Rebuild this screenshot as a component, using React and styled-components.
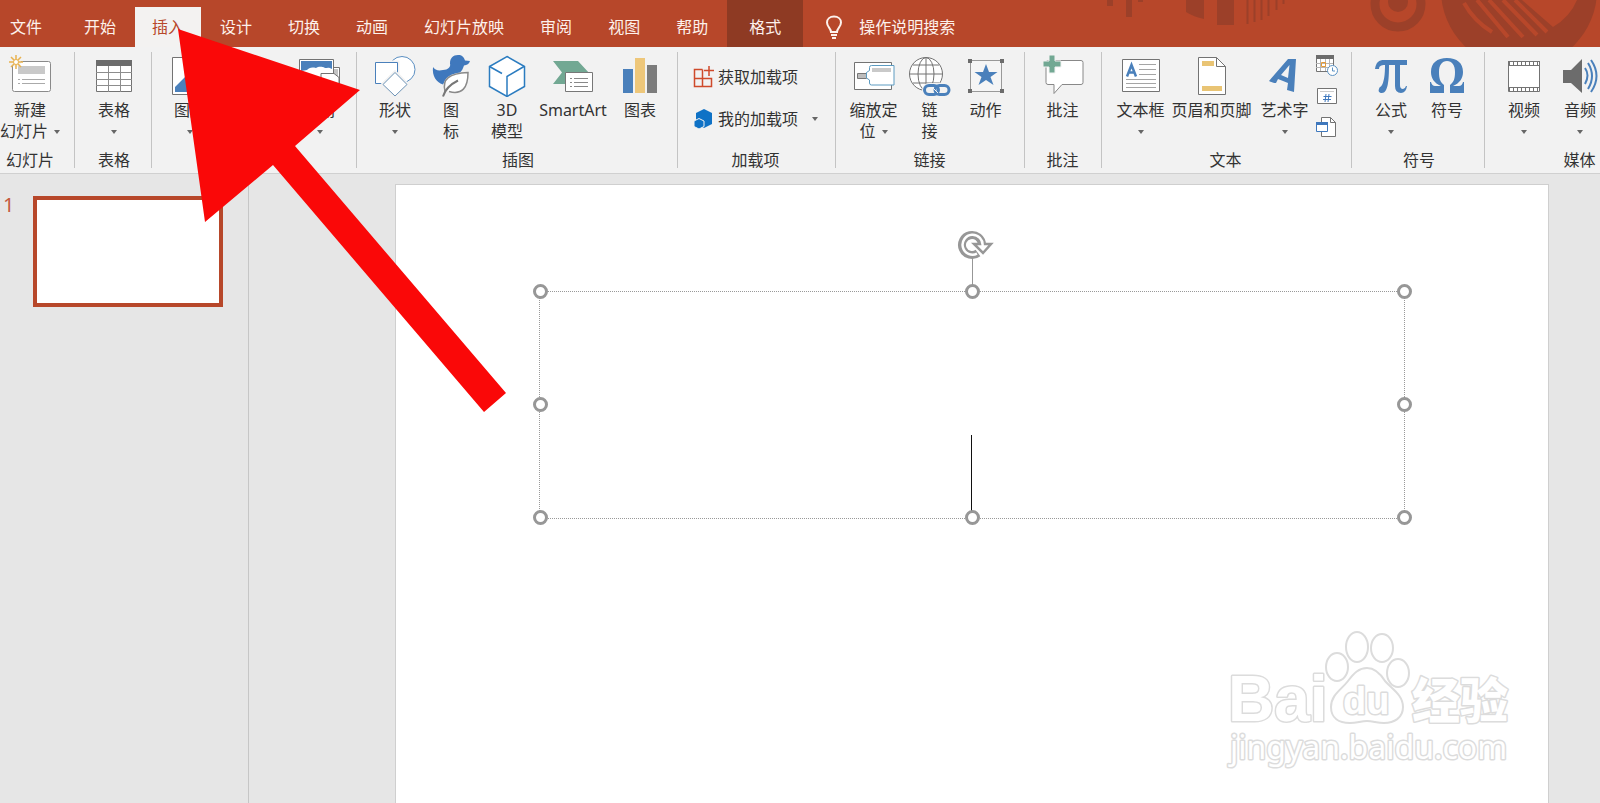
import React from 'react';
import styled, { createGlobalStyle, css } from 'styled-components';

const Global = createGlobalStyle`
  * { box-sizing: border-box; }
  body {
    margin: 0;
    background: #e6e6e6;
    font-family: "Noto Sans", "Noto Sans CJK SC", sans-serif;
    font-size: 16px;
    color: #333;
  }
  button, input {
    font: inherit;
    color: inherit;
    border: 0;
    padding: 0;
    background: none;
  }
`;

const Page = styled.div`
  position: relative;
  display: flex;
  flex-direction: column;
  height: 100vh;
  overflow: hidden;
`;

const TitleBar = styled.header`
  position: relative;
  display: flex;
  align-items: flex-end;
  flex: none;
  height: 47px;
  background: #b7472a;
  color: #fdf1ec;
`;

const Tabs = styled.nav`
  display: flex;
  align-items: flex-end;
  gap: 2px;
`;

const Tab = styled.button`
  height: 40px;
  padding: 0 17px;
  line-height: 40px;
  white-space: nowrap;
  ${(p) => p.$first && css`padding: 0 17px 0 10px; margin-right: 6px;`}
  ${(p) => p.$active && css`background: #f3f2f1; color: #b7472a;`}
  ${(p) => p.$context && css`
    height: 47px;
    padding: 7px 22px 0;
    background: #8e3a23;
  `}
`;

const Search = styled.label`
  display: flex;
  align-items: center;
  gap: 16px;
  height: 40px;
  margin-left: 22px;
`;

const SearchInput = styled.input`
  width: 130px;
  outline: none;
  &::placeholder { color: #fdf1ec; opacity: 1; }
`;

const Ornament = styled.svg`
  position: absolute;
  right: 0;
  top: 0;
`;

const Ribbon = styled.section`
  display: flex;
  flex: none;
  height: 127px;
  padding: 5px 0;
  background: #f2f2f2;
  border-bottom: 1px solid #d0d0d0;
  overflow: hidden;
`;

const GroupBox = styled.div`
  display: flex;
  flex-direction: column;
  align-items: center;
  justify-content: space-between;
  flex: none;
  width: ${(p) => p.$width}px;
  padding: 3px ${(p) => p.$end || 0}px 0 ${(p) => (p.$end ? 0 : 2)}px;
  border-right: 1px solid #c4c4c4;
`;

const GroupItems = styled.div`
  display: flex;
  align-self: ${(p) => (p.$start ? 'flex-start' : 'center')};
  gap: ${(p) => p.$gap || 0}px;
  margin-left: ${(p) => p.$start || 0}px;
`;

const GroupName = styled.div`
  height: 20px;
  line-height: 20px;
  margin-bottom: -2px;
  white-space: nowrap;
`;

const Tool = styled.button`
  display: flex;
  flex-direction: column;
  align-items: center;
  flex: none;
  width: ${(p) => p.$width || 56}px;
  height: 90px;
  line-height: 21px;
  white-space: nowrap;
  & > svg { flex: none; margin-bottom: 3px; }
`;

const Line = styled.span`
  display: flex;
  align-items: center;
  justify-content: center;
  gap: 6px;
  height: 21px;
`;

const Arrow = styled.i`
  border: 3px solid transparent;
  border-top: 4px solid #666;
  border-bottom: 0;
`;

const Stack = styled.div`
  display: flex;
  flex-direction: column;
  gap: ${(p) => p.$gap}px;
  padding-top: ${(p) => p.$top}px;
`;

const RowTool = styled.button`
  display: flex;
  align-items: center;
  gap: 4px;
  height: 24px;
  line-height: 24px;
  white-space: nowrap;
  & > i { margin-left: 10px; }
`;

const IconTool = styled.button`
  display: block;
  width: 24px;
  height: 24px;
  & > svg { display: block; }
`;

const Work = styled.main`
  position: relative;
  display: flex;
  flex: 1;
  min-height: 0;
`;

const Slides = styled.aside`
  display: flex;
  align-items: flex-start;
  gap: 20px;
  flex: none;
  width: 249px;
  padding: 22px 25px 0 3px;
  border-right: 1px solid #c6c6c6;
`;

const SlideNumber = styled.span`
  width: 10px;
  line-height: 18px;
  font-size: 20px;
  color: #c4593c;
`;

const Thumb = styled.button`
  flex: 1;
  height: 111px;
  background: #fff;
  border: 4px solid #b7472a;
`;

const Stage = styled.div`
  flex: 1;
  min-width: 0;
  padding: 10px 51px 0 146px;
  overflow: hidden;
`;

const Slide = styled.div`
  position: relative;
  aspect-ratio: 16 / 9;
  background: #fff;
  border: 1px solid #cfcfcf;
`;

const TextBox = styled.div`
  position: absolute;
  left: 12.4%;
  top: 16.4%;
  width: 75.2%;
  height: 35.2%;
  border: 1px dotted #999;
`;

const Handle = styled.i`
  position: absolute;
  left: ${(p) => p.$x}%;
  top: ${(p) => p.$y}%;
  width: 15px;
  height: 15px;
  margin: -8px -7px;
  border: 3px solid #979797;
  border-radius: 50%;
  background: #fff;
`;

const Rotate = styled.svg`
  position: absolute;
  left: 50%;
  bottom: 100%;
  margin-left: -16px;
`;

const Caret = styled.i`
  position: absolute;
  left: 50%;
  bottom: 7px;
  width: 1px;
  height: 76px;
  margin-left: -1px;
  background: #111;
`;

const Watermark = styled.svg`
  position: absolute;
  right: 80px;
  bottom: 28px;
  font-family: "Liberation Sans", "Noto Sans CJK SC", sans-serif;
  font-weight: 700;
  & text { paint-order: stroke; stroke-width: 3px; stroke-linejoin: round; }
`;

const Pointer = styled.svg`
  position: absolute;
  left: 0;
  top: 0;
  pointer-events: none;
`;

const blue = '#4a80bb';
const grey = '#737373';

const Icon = ({ w = 42, h = 42, children }) => (
  <svg width={w} height={h} viewBox={`0 0 ${w} ${h}`} fill="none" stroke={grey} aria-hidden="true">
    {children}
  </svg>
);

const icons = {
  newSlide: (
    <Icon>
      <rect x="3.500" y="6.500" width="38" height="30" rx="2" fill="#fff" stroke="#8a8a8a" />
      <rect x="9" y="11" width="27" height="8" fill="#c9c9c9" stroke="none" />
      <path d="M9 24.500h2M13 24.500h23M9 28.500h2M13 28.500h23" stroke="#aaa" />
      <circle cx="7" cy="7" r="5" fill="#f2f2f2" stroke="none" />
      <path d="M7 0v14M0 7h14M2 2l10 10M12 2L2 12" stroke="#e9b24f" strokeWidth="1.500" />
      <circle cx="7" cy="7" r="2.500" fill="#fff" stroke="#e9b24f" />
    </Icon>
  ),
  table: (
    <Icon w={38}>
      <path d="M1.500 5.500h35v31h-35z" fill="#fff" />
      <path d="M1 5h36v6H1z" fill="#6c6c6c" stroke="none" />
      <path d="M1 17.500h36M1 24.500h36M1 30.500h36M13.500 11v26M25.500 11v26" stroke="#8d8d8d" />
    </Icon>
  ),
  picture: (
    <Icon w={38}>
      <path d="M1.500 2.500h36v37h-36z" fill="#fff" />
      <path d="M4 37V32l12-12 9 9 4-4 7 8v4z" fill={blue} stroke="none" />
      <circle cx="27" cy="12" r="4" fill="#e8b95e" stroke="none" />
    </Icon>
  ),
  album: (
    <Icon>
      <path d="M12 12.500h28.500v24H12z" fill="#fff" />
      <path d="M34 14h5v20h-5z" fill="#c4c4c4" stroke="none" />
      <path d="M.5 4.500h34v25H.5z" fill="#fff" />
      <path d="M2 6h31v8c-3-2-5-1-7-1-4-2-7-1-9 0-5-1-7 0-9 2l-6 1z" fill={blue} stroke="none" />
      <path d="M22 18.500h13l5 4v8H22z" fill="#fff" />
    </Icon>
  ),
  shapes: (
    <Icon>
      <circle cx="28" cy="14.500" r="13" fill="#fff" stroke="#5b8fc2" />
      <path d="M1.500 7.500h22v21h-22z" fill="#fff" stroke="#f2f2f2" strokeWidth="4" />
      <path d="M1.500 7.500h22v21h-22z" fill="#fff" stroke="#4a80bb" />
      <path d="M21 17.500L33 29.500 21 41 9 29.500z" fill="#fff" stroke="#f2f2f2" strokeWidth="4" />
      <path d="M21 17.500L33 29.500 21 41 9 29.500z" fill="#fff" stroke="#6d93b6" />
    </Icon>
  ),
  duck: (
    <Icon w={38}>
      <path d="M18 8.500C18 3 21 0 26 0c4 0 6 2 7 5.500l5 .5c-1 3-3 4-6 4.500-1 3-2 5-4 7-8 1-14 4-16 10l-1 2C4 27 0 21 1 12c2 3 5 4 10 3 5 0 8-3 7-6.500z" fill="#3f78bd" stroke="none" />
      <path d="M13 36c-3-12 4-17.500 23-18.500C36 33 30 40 17 36.500" fill="#fff" stroke="#8a8a8a" strokeWidth="1.500" />
      <path d="M11 41.500c2-7 7-12 15-16" stroke="#777" strokeWidth="2" />
    </Icon>
  ),
  cube: (
    <Icon w={38}>
      <path d="M19 1.500l17.500 10v20L19 41.500 1.500 31.500v-20z" fill="#fff" stroke="#2b7cc0" strokeWidth="1.500" />
      <path d="M36 11.500L19 21.500V41M1.500 11.500L14 18.500" stroke="#2b7cc0" strokeWidth="1.500" />
    </Icon>
  ),
  smartart: (
    <Icon>
      <path d="M1 6h25l12 13-6 10H1l9-11.500z" fill="#72a893" stroke="none" />
      <path d="M13.500 17.500h27v19h-27z" fill="#fff" stroke="#777" />
      <path d="M18 23.500h2M22 23.500h14M18 27.500h2M22 27.500h14M18 31.500h2M22 31.500h14" stroke="#888" />
    </Icon>
  ),
  chart: (
    <Icon w={34}>
      <path d="M0 14h10v24H0z" fill={blue} stroke="none" />
      <path d="M12 3h10v35H12z" fill="#eec77a" stroke="none" />
      <path d="M24 10h10v28H24z" fill="#7c7c7c" stroke="none" />
    </Icon>
  ),
  addin: (
    <Icon w={21} h={22}>
      <path d="M9.500 3.500h-8v17h17v-8h-17M9.500 3.500v17" stroke="#cf4a2b" strokeWidth="1.500" />
      <path d="M16 0v10M11 4.500h10" stroke="#cf4a2b" strokeWidth="1.500" />
    </Icon>
  ),
  myAddin: (
    <Icon w={21} h={22}>
      <path d="M11 1l8 4v11l-8 4-8-4V5z" fill="#0f72c6" stroke="none" />
      <path d="M6 10.500l5 2.500v5.500L6 21l-5-2.500V13z" fill="#0f72c6" stroke="#f2f2f2" strokeWidth="1" />
    </Icon>
  ),
  zoom: (
    <Icon>
      <path d="M1.500 7.500h37v27h-37z" fill="#fff" />
      <path d="M4.500 18.500h9v5h-9z" fill="#bdbdbd" stroke="#777" />
      <path d="M13.500 17.500l3-2v-3q0-2 2-2h22.500v19.500H18.500q-2 0-2-2v-3l-3-2z" fill="#fff" stroke="#5c9bc1" />
      <path d="M19 13h19v4H19z" fill="#c9c9c9" stroke="none" />
    </Icon>
  ),
  link: (
    <Icon>
      <circle cx="17" cy="19" r="16.500" fill="#fff" />
      <ellipse cx="17" cy="19" rx="8" ry="16.500" />
      <path d="M17 2v34M1 19h32M4 10h26M4 28h26" />
      <rect x="13" y="28" width="29" height="14" rx="7" fill="#f2f2f2" stroke="none" />
      <rect x="15.500" y="30.500" width="14" height="9" rx="4.500" stroke={blue} strokeWidth="3" />
      <rect x="26" y="30.500" width="14" height="9" rx="4.500" stroke={blue} strokeWidth="3" />
      <path d="M24 33l5 5" stroke="#f2f2f2" strokeWidth="1" />
    </Icon>
  ),
  action: (
    <Icon w={38}>
      <path d="M3.500 5.500h31v31h-31z" fill="#f5f5f5" stroke="#999" />
      <path d="M1 4h4v4H1zM33 4h4v4h-4zM1 34h4v4H1zM33 34h4v4h-4z" fill="#6c6c6c" stroke="none" />
      <path d="M19 9l3 8h8.500l-7 5 3 8-7.500-5-7.500 5 3-8-7-5H16z" fill={blue} stroke="none" />
    </Icon>
  ),
  comment: (
    <Icon>
      <path d="M6 5.500h33q2 0 2 2v20q0 2-2 2H20l-8 9v-9H6q-2 0-2-2v-20q0-2 2-2z" fill="#fff" stroke="#888" />
      <path d="M7 0h6v6h6v6h-6v6H7v-6H1V6h6z" fill="#72a893" stroke="#f2f2f2" />
    </Icon>
  ),
  textbox: (
    <Icon w={38}>
      <path d="M.5 4.500h37v32H.5z" fill="#fff" />
      <path d="M17 9.500h17M17 14.500h17M17 19.500h17M4 24.500h30M4 28.500h30M4 32.500h30" stroke="#a5a5a5" />
      <path d="M5 21.500L9.500 10 14 21.500M6.500 17.500h6" stroke={blue} strokeWidth="2.500" />
    </Icon>
  ),
  page: (
    <Icon w={28}>
      <path d="M.5 2.500h18l9 9v28H.5z" fill="#fff" />
      <path d="M18.500 2.500v9h9" />
      <path d="M4 6h12v5H4zM4 31h20v5H4z" fill="#e9c474" stroke="none" />
    </Icon>
  ),
  wordart: (
    <Icon w={38}>
      <path d="M3 26L22 4h8l-2 33-7-2 1-7-10-4-2 4c-3 0-5-1-7-2zM15 20l7 3 1.500-13z" fill={blue} fillRule="evenodd" stroke="none" />
    </Icon>
  ),
  date: (
    <Icon w={24} h={24}>
      <path d="M1.500 1.500h17v15h-17z" fill="#fff" />
      <path d="M1 0h18v4H1z" fill="#6c6c6c" stroke="none" />
      <path d="M1 8.500h17M1 12.500h17M5.500 4v12M10.500 4v12M14.500 4v12" stroke="#b5b5b5" />
      <path d="M6.500 7.500h4v4h-4z" stroke="#e59a35" />
      <circle cx="17.500" cy="15.500" r="5" fill="#fff" stroke="#5c93c4" />
      <path d="M17.500 12.500V16H20" stroke="#5c93c4" />
    </Icon>
  ),
  number: (
    <Icon w={24} h={24}>
      <path d="M2.500 3.500h19v15h-19z" fill="#fff" />
      <path d="M5 6.500h14" stroke="#ccc" />
      <path d="M11 9l-1 8M14 9l-1 8M8.500 11.500h8M8 14.500h8" stroke="#3f78bd" />
    </Icon>
  ),
  object: (
    <Icon w={24} h={24}>
      <path d="M6.500 2.500h9l5 5v14h-14z" fill="#fff" />
      <path d="M15.500 2.500v5h5" />
      <path d="M1.500 7.500h11v9h-11z" fill="#fff" stroke="#3f78bd" />
      <path d="M1 7h12v3H1z" fill="#3f78bd" stroke="none" />
    </Icon>
  ),
  pi: (
    <Icon w={34}>
      <path d="M1 14C2 7 5 5 10 5h23v5h-7v20q0 4 3 4 2 0 3-3h1q-1 7-6 7-6 0-6-7V10h-6c0 15-1 28-7 28-3 0-4-2-3-4 0-2 2-2 3-4 2-4 3-10 3-20-4 0-6 1-6 4z" fill={blue} stroke="none" />
    </Icon>
  ),
  omega: (
    <Icon w={36}>
      <path d="M1 27h1q1 4 4 4h6C5 28 2 23 2 17 2 8 8 3 18 3s16 5 16 14c0 6-3 11-10 14h6q3 0 4-4h1v11H21v-8c4-3 5-7 5-13 0-7-3-11-8-11s-8 4-8 11c0 6 1 10 5 13v8H1z" fill={blue} stroke="none" />
    </Icon>
  ),
  video: (
    <Icon w={34}>
      <path d="M1.500 6.500h31v30h-31z" fill="#fff" />
      <path d="M2 8.500h30M2 34.500h30" strokeWidth="3" strokeDasharray="1 3" />
      <path d="M1 6.500h32M1 10.500h32M1 32.500h32" />
    </Icon>
  ),
  audio: (
    <Icon w={36}>
      <path d="M1 15h8L20 4v34L9 28H1z" fill="#6c6c6c" stroke="none" />
      <path d="M23 13q5 7 0 16M26 8q8 13 0 26M29 5q11 16 0 32" stroke={blue} strokeWidth="2" />
    </Icon>
  ),
};

function Button({ icon, lines, width, arrow }) {
  return (
    <Tool $width={width}>
      {icons[icon]}
      {lines.map((t, i) => (
        <Line key={t}>
          {t}
          {arrow === 'inline' && i === lines.length - 1 && <Arrow />}
        </Line>
      ))}
      {arrow === 'below' && <Line><Arrow /></Line>}
    </Tool>
  );
}

function Group({ name, width, end, start, gap, children }) {
  return (
    <GroupBox $width={width} $end={end}>
      <GroupItems $gap={gap} $start={start}>{children}</GroupItems>
      <GroupName>{name}</GroupName>
    </GroupBox>
  );
}

const tabs = ['文件', '开始', '插入', '设计', '切换', '动画', '幻灯片放映', '审阅', '视图', '帮助', '格式'];

const handles = [[0, 0], [50, 0], [100, 0], [0, 50], [100, 50], [0, 100], [50, 100], [100, 100]];

export default function App() {
  return (
    <Page>
      <Global />
      <TitleBar>
        <Ornament width="500" height="47" viewBox="0 0 500 47" fill="none" stroke="#9c4029" aria-hidden="true">
          <path d="M7 0h6v6H7zM26 0h6v17h-6zM38 0h5v2h-5zM86 0h18v19q-10-2-18-7zM117 0h17v25h-17z" fill="#9c4029" stroke="none" />
          <path d="M147.500 0v24M154.500 0v22M161.500 0v20M168.500 0v16M176.500 0v10M183.500 0v4" strokeWidth="2" />
          <circle cx="298" cy="4" r="23" strokeWidth="9" />
          <circle cx="298" cy="2" r="10" fill="#9c4029" stroke="none" />
          <circle cx="419" cy="-10" r="78" fill="#9c4029" stroke="none" />
          <path d="M422 0l31 27q17-10 24-27z" fill="#b7472a" stroke="none" />
          <path d="M364 3q10 18 28 29M377 0l31 37M389 0l34 37M403 0l34 35M415 0l32 32" stroke="#b7472a" strokeWidth="4" />
        </Ornament>
        <Tabs>
          {tabs.map((t) => (
            <Tab key={t} $first={t === '文件'} $active={t === '插入'} $context={t === '格式'}>{t}</Tab>
          ))}
        </Tabs>
        <Search>
          <svg width="18" height="24" viewBox="0 0 18 24" fill="none" stroke="#fdf1ec" strokeWidth="2" aria-hidden="true">
            <path d="M6 17c0-4-4-5-4-9.500C2 4 5 1.500 9 1.500s7 2.500 7 6C16 12 12 13 12 17zM6 20h6M7 23h4" />
          </svg>
          <SearchInput placeholder="操作说明搜索" aria-label="操作说明搜索" />
        </Search>
      </TitleBar>

      <Ribbon>
        <Group name="幻灯片" width={75} end={14}>
          <Button icon="newSlide" lines={['新建', '幻灯片']} width={60} arrow="inline" />
        </Group>
        <Group name="表格" width={77}>
          <Button icon="table" lines={['表格']} arrow="below" />
        </Group>
        <Group name="图像" width={205} gap={74}>
          <Button icon="picture" lines={['图片']} arrow="below" />
          <Button icon="album" lines={['相册']} arrow="below" />
        </Group>
        <Group name="插图" width={321}>
          <Button icon="shapes" lines={['形状']} arrow="below" />
          <Button icon="duck" lines={['图', '标']} />
          <Button icon="cube" lines={['3D', '模型']} />
          <Button icon="smartart" lines={['SmartArt']} width={76} />
          <Button icon="chart" lines={['图表']} width={58} />
        </Group>
        <Group name="加载项" width={158} end={2}>
          <Stack $gap={18} $top={10}>
            <RowTool>{icons.addin}获取加载项</RowTool>
            <RowTool>{icons.myAddin}我的加载项<Arrow /></RowTool>
          </Stack>
        </Group>
        <Group name="链接" width={189} end={1}>
          <Button icon="zoom" lines={['缩放定', '位']} arrow="inline" />
          <Button icon="link" lines={['链', '接']} />
          <Button icon="action" lines={['动作']} />
        </Group>
        <Group name="批注" width={77} end={1}>
          <Button icon="comment" lines={['批注']} />
        </Group>
        <Group name="文本" width={250} end={2}>
          <Button icon="textbox" lines={['文本框']} arrow="below" />
          <Button icon="page" lines={['页眉和页脚']} width={86} />
          <Button icon="wordart" lines={['艺术字']} width={60} arrow="below" />
          <Stack $gap={6} $top={0}>
            <IconTool aria-label="日期和时间">{icons.date}</IconTool>
            <IconTool aria-label="幻灯片编号">{icons.number}</IconTool>
            <IconTool aria-label="对象">{icons.object}</IconTool>
          </Stack>
        </Group>
        <Group name="符号" width={133}>
          <Button icon="pi" lines={['公式']} arrow="below" />
          <Button icon="omega" lines={['符号']} />
        </Group>
        <Group name="媒体" width={188} start={9}>
          <Button icon="video" lines={['视频']} arrow="below" />
          <Button icon="audio" lines={['音频']} arrow="below" />
        </Group>
      </Ribbon>

      <Work>
        <Slides>
          <SlideNumber>1</SlideNumber>
          <Thumb aria-label="幻灯片 1" />
        </Slides>
        <Stage>
          <Slide>
            <TextBox>
              <Rotate width="40" height="62" viewBox="0 0 40 62" fill="none" stroke="#979797" aria-hidden="true">
                <path d="M16.500 28v34" strokeWidth="1" />
                <path d="M26 15A10 10 0 1 0 22 23" strokeWidth="8" />
                <path d="M18 14h17l-8 9z" fill="#fff" strokeWidth="2.500" />
                <path d="M26.500 16A10 10 0 1 0 21 23.700" stroke="#fff" strokeWidth="2.500" />
              </Rotate>
              <Caret />
              {handles.map(([x, y]) => <Handle key={`${x}-${y}`} $x={x} $y={y} />)}
            </TextBox>
          </Slide>
        </Stage>
        <Watermark width="300" height="150" viewBox="0 0 300 150" fill="#fff" stroke="#dcdcdc">
          <text x="8" y="96" fontSize="64">Bai</text>
          <g strokeWidth="2">
            <ellipse cx="117" cy="42" rx="11" ry="14" />
            <ellipse cx="137" cy="22" rx="11" ry="15" />
            <ellipse cx="162" cy="23" rx="11" ry="14" />
            <ellipse cx="178" cy="48" rx="11" ry="14" />
            <path d="M147 43c8 0 13 5 18 13 7 8 18 14 18 26 0 11-9 16-19 16-7 0-11-2-17-2s-10 2-17 2c-11 0-19-5-19-16 0-12 10-17 17-26 6-8 11-13 19-13z" />
          </g>
          <text x="123" y="89" fontSize="38">du</text>
          <text x="192" y="93" fontSize="48" fontWeight="900">经验</text>
          <text x="10" y="134" fontSize="32" fontWeight="400" fontFamily="Noto Sans">jingyan.baidu.com</text>
        </Watermark>
      </Work>

      <Pointer width="520" height="420" viewBox="0 0 520 420" aria-hidden="true">
        <path d="M178 29L360 90 295 146 506 393 484 412 273 165 205 222z" fill="#fa0808" />
      </Pointer>
    </Page>
  );
}
